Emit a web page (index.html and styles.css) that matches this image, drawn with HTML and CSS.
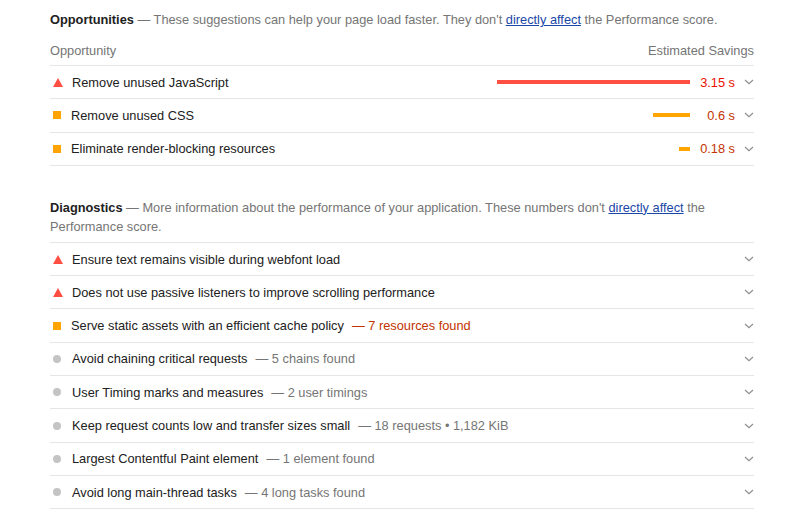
FILE: index.html
```html
<!DOCTYPE html>
<html>
<head>
<meta charset="utf-8">
<link rel="stylesheet" href="styles.css">
</head>
<body>
<div class="page">
  <section class="group opps">
    <p class="group-desc"><strong class="group-title">Opportunities</strong> — These suggestions can help your page load faster. They don't <a href="#">directly affect</a> the Performance score.</p>
    <div class="col-header">
      <span>Opportunity</span>
      <span>Estimated Savings</span>
    </div>
    <div class="row">
      <span class="icon tri"></span>
      <span class="title">Remove unused JavaScript</span>
      <span class="spacer"></span>
      <span class="bar fail" style="width:193px"></span>
      <span class="saving fail-text">3.15 s</span>
      <svg class="chev" viewBox="0 0 10 6"><polyline points="1,1 5,4.6 9,1"/></svg>
    </div>
    <div class="row">
      <span class="icon sq"></span>
      <span class="title">Remove unused CSS</span>
      <span class="spacer"></span>
      <span class="bar avg" style="width:37px"></span>
      <span class="saving avg-text">0.6 s</span>
      <svg class="chev" viewBox="0 0 10 6"><polyline points="1,1 5,4.6 9,1"/></svg>
    </div>
    <div class="row">
      <span class="icon sq"></span>
      <span class="title">Eliminate render-blocking resources</span>
      <span class="spacer"></span>
      <span class="bar avg" style="width:11px"></span>
      <span class="saving avg-text">0.18 s</span>
      <svg class="chev" viewBox="0 0 10 6"><polyline points="1,1 5,4.6 9,1"/></svg>
    </div>
  </section>

  <section class="group diags">
    <p class="group-desc"><strong class="group-title">Diagnostics</strong> — More information about the performance of your application. These numbers don't <a href="#">directly affect</a> the Performance score.</p>
    <div class="rows top-border">
      <div class="row">
        <span class="icon tri"></span>
        <span class="title">Ensure text remains visible during webfont load</span>
        <span class="spacer"></span>
        <svg class="chev" viewBox="0 0 10 6"><polyline points="1,1 5,4.6 9,1"/></svg>
      </div>
      <div class="row">
        <span class="icon tri"></span>
        <span class="title">Does not use passive listeners to improve scrolling performance</span>
        <span class="spacer"></span>
        <svg class="chev" viewBox="0 0 10 6"><polyline points="1,1 5,4.6 9,1"/></svg>
      </div>
      <div class="row">
        <span class="icon sq"></span>
        <span class="title">Serve static assets with an efficient cache policy</span>
        <span class="display avg-text">— 7 resources found</span>
        <span class="spacer"></span>
        <svg class="chev" viewBox="0 0 10 6"><polyline points="1,1 5,4.6 9,1"/></svg>
      </div>
      <div class="row">
        <span class="icon dot"></span>
        <span class="title">Avoid chaining critical requests</span>
        <span class="display">— 5 chains found</span>
        <span class="spacer"></span>
        <svg class="chev" viewBox="0 0 10 6"><polyline points="1,1 5,4.6 9,1"/></svg>
      </div>
      <div class="row">
        <span class="icon dot"></span>
        <span class="title">User Timing marks and measures</span>
        <span class="display">— 2 user timings</span>
        <span class="spacer"></span>
        <svg class="chev" viewBox="0 0 10 6"><polyline points="1,1 5,4.6 9,1"/></svg>
      </div>
      <div class="row">
        <span class="icon dot"></span>
        <span class="title">Keep request counts low and transfer sizes small</span>
        <span class="display">— 18 requests • 1,182 KiB</span>
        <span class="spacer"></span>
        <svg class="chev" viewBox="0 0 10 6"><polyline points="1,1 5,4.6 9,1"/></svg>
      </div>
      <div class="row">
        <span class="icon dot"></span>
        <span class="title">Largest Contentful Paint element</span>
        <span class="display">— 1 element found</span>
        <span class="spacer"></span>
        <svg class="chev" viewBox="0 0 10 6"><polyline points="1,1 5,4.6 9,1"/></svg>
      </div>
      <div class="row">
        <span class="icon dot"></span>
        <span class="title">Avoid long main-thread tasks</span>
        <span class="display">— 4 long tasks found</span>
        <span class="spacer"></span>
        <svg class="chev" viewBox="0 0 10 6"><polyline points="1,1 5,4.6 9,1"/></svg>
      </div>
    </div>
  </section>
</div>
</body>
</html>
```
FILE: styles.css
```css
html, body {
  margin: 0;
  padding: 0;
  background: #ffffff;
}
body {
  font-family: "Liberation Sans", Arial, sans-serif;
  font-size: 12.8px;
  color: #212121;
}
.page {
  width: 704px;
  margin-left: 50px;
  padding-top: 10px;
}
.group-desc {
  margin: 0;
  line-height: 19px;
  color: #757575;
}
.group-title {
  color: #212121;
  font-weight: bold;
}
.group-desc a {
  color: #1a47a6;
  text-decoration: underline;
}
.col-header {
  display: flex;
  justify-content: space-between;
  align-items: center;
  height: 30px;
  margin-top: 6px;
  border-bottom: 1px solid #e6e6e6;
  color: #757575;
}
.row {
  display: flex;
  align-items: center;
  height: 32.3px;
  border-bottom: 1px solid #e6e6e6;
}
.top-border {
  border-top: 1px solid #e6e6e6;
  margin-top: 6px;
}
.diags {
  margin-top: 32px;
}
.icon {
  flex: none;
}
.icon.tri {
  width: 0;
  height: 0;
  border-left: 5px solid transparent;
  border-right: 5px solid transparent;
  border-bottom: 9px solid #ff4e42;
  margin-left: 3px;
  margin-right: 9px;
}
.icon.sq {
  width: 8px;
  height: 8px;
  background: #ffa400;
  margin-left: 3px;
  margin-right: 10px;
}
.icon.dot {
  width: 8px;
  height: 8px;
  border-radius: 50%;
  background: #c4c4c4;
  margin-left: 3px;
  margin-right: 11px;
}
.title {
  color: #212121;
  white-space: nowrap;
}
.display {
  margin-left: 8px;
  color: #757575;
  white-space: nowrap;
}
.spacer {
  flex: 1;
}
.bar {
  flex: none;
  height: 4px;
}
.bar.fail { background: #ff4e42; }
.bar.avg { background: #ffa400; }
.saving {
  flex: none;
  width: 45px;
  text-align: right;
  white-space: nowrap;
}
.fail-text { color: #eb0f00; }
.avg-text { color: #c33300; }
.chev {
  flex: none;
  width: 10px;
  height: 6px;
  margin-left: 9px;
}
.chev polyline {
  fill: none;
  stroke: #8f8f8f;
  stroke-width: 1.2;
}
```
